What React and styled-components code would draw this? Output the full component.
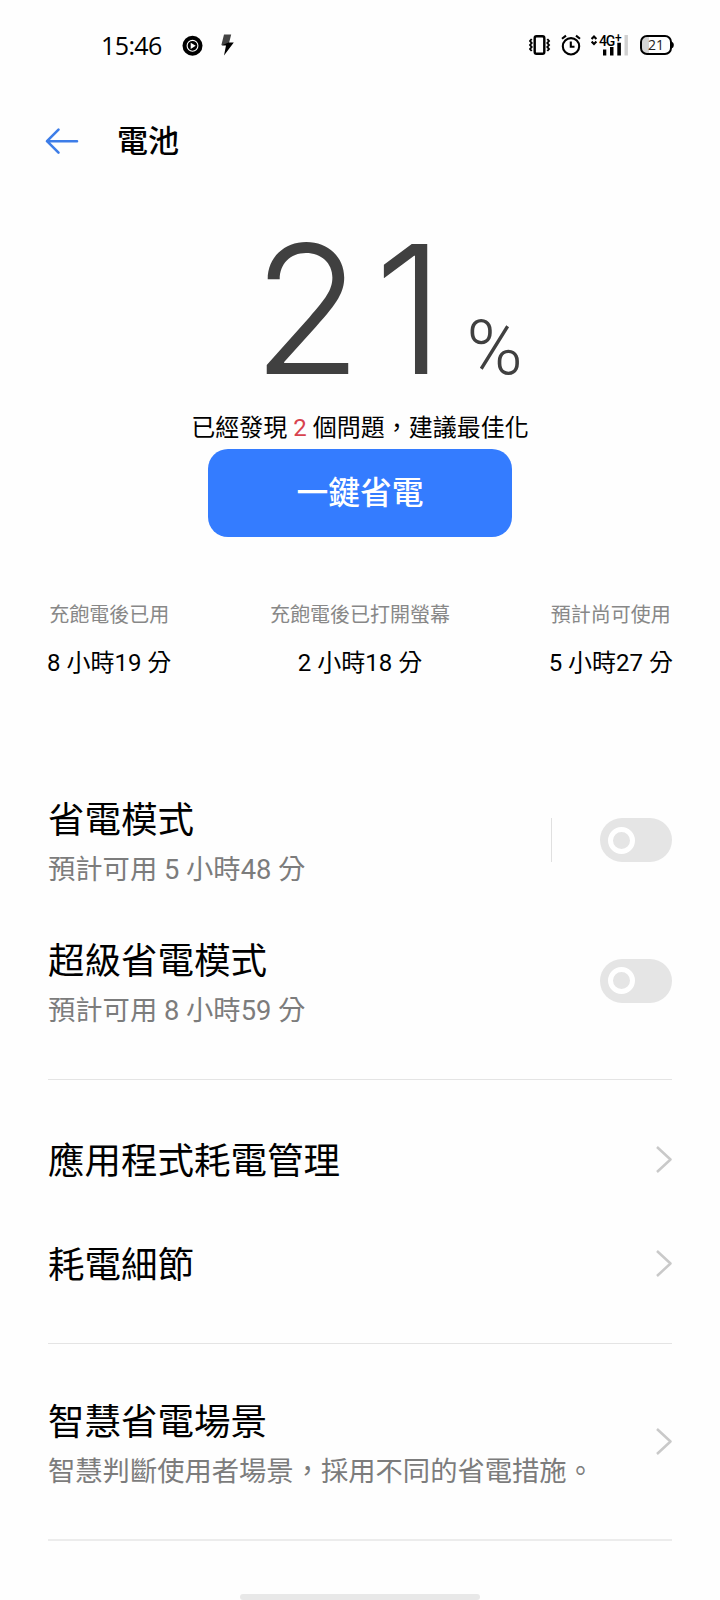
import React from 'react';
import styled, { createGlobalStyle } from 'styled-components';

const GlobalStyle = createGlobalStyle`
  * {
    box-sizing: border-box;
  }
  body {
    margin: 0;
    background: #fefefe;
    color: #000;
    font-family: Roboto, 'Noto Sans CJK TC', sans-serif;
  }
`

const Screen = styled.div`
  display: flex;
  flex-direction: column;
  width: 720px;
  height: 1600px;
  overflow: hidden;
`
const StatusBar = styled.header`
  display: flex;
  align-items: center;
  height: 90px;
  padding: 0 46px 0 101px;
`
const Clock = styled.time`
  width: 81px;
  font: 400 25px/30px 'Open Sans', sans-serif;
  letter-spacing: -0.6px;
`
const StatusIcons = styled.div`
  display: flex;
  align-items: center;
  gap: ${props => props.gap}px;
  margin-left: ${props => (props.right ? 'auto' : '0')};
`
const TitleBar = styled.div`
  display: flex;
  align-items: center;
  gap: 38px;
  height: 102px;
  padding-left: 45px;
`
const PageTitle = styled.h1`
  margin: 0;
  padding-top: 2px;
  font-size: 31px;
  font-weight: 500;
  line-height: 40px;
`
const Summary = styled.section`
  display: flex;
  flex-direction: column;
  align-items: center;
`
const Level = styled.div`
  display: flex;
  align-items: baseline;
  height: 218px;
  padding: 29px 0 0 55px;
  color: #404040;
  font-weight: 300;
`
const Digits = styled.span`
  font-family: Inter, sans-serif;
  font-size: 179px;
  line-height: 176px;
  letter-spacing: 12px;
`
const Percent = styled.span`
  margin-left: 10px;
  font-size: 76px;
  line-height: 76px;
`
const Issues = styled.p`
  margin: 0;
  font-size: 24px;
  line-height: 37px;
`
const IssueCount = styled.span`
  color: #d8434e;
`
const OptimizeButton = styled.button`
  width: 304px;
  height: 88px;
  margin-top: 2px;
  padding: 0 0 6px;
  border: 0;
  border-radius: 20px;
  background: #347cff;
  color: #fff;
  font-family: inherit;
  font-size: 31.8px;
  font-weight: 500;
`
const Stats = styled.section`
  display: flex;
  justify-content: space-between;
  height: 225px;
  padding: 63px 47px 0;
`
const Stat = styled.div`
  display: flex;
  flex-direction: column;
  align-items: center;
`
const StatLabel = styled.span`
  color: #888;
  font-size: 20px;
  line-height: 30px;
`
const StatValue = styled.span`
  margin-top: 15px;
  font-size: 24px;
  line-height: 36px;
`
const Group = styled.section`
  height: ${props => props.height}px;
  margin: 0 48px;
  padding-top: ${props => props.top}px;
  border-bottom: ${props => props.line || 1}px solid ${props => (props.line ? '#ececec' : '#e4e4e4')};
`
const Row = styled.div`
  display: flex;
  align-items: center;
  height: ${props => props.height}px;
`
const RowText = styled.div`
  flex: 1;
  padding-top: ${props => (props.tall ? 8 : 4)}px;
`
const RowTitle = styled.div`
  font-size: 36.5px;
  line-height: 52px;
`
const RowNote = styled.div`
  color: #7c7c7c;
  font-size: 27.3px;
  line-height: 46px;
`
const Separator = styled.i`
  width: 1px;
  height: 44px;
  margin-right: 48px;
  background: #e0e0e0;
`
const Switch = styled.button`
  display: flex;
  align-items: center;
  width: 72px;
  height: 44px;
  padding: 0 8px;
  border: 0;
  border-radius: 22px;
  background: #e5e5e5;
`
const Knob = styled.span`
  width: 27px;
  height: 27px;
  border: 5.5px solid #fff;
  border-radius: 50%;
`
const HomeIndicator = styled.div`
  width: 240px;
  height: 6px;
  margin: auto auto 0;
  border-radius: 3px;
  background: #e8e8e8;
`
const Network = styled.div`
  position: relative;
  width: 39px;
  height: 24px;
`
const NetworkLabel = styled.span`
  position: absolute;
  top: 1px;
  left: 8px;
  font: 500 14px/14px Roboto, sans-serif;
  letter-spacing: -1.2px;
`
const Plus = styled.sup`
  position: relative;
  top: -4px;
  margin-left: 1px;
  font-size: 12px;
  line-height: 0;
  vertical-align: baseline;
`
const Battery = styled.div`
  position: relative;
  display: flex;
  width: 34px;
  height: 20px;
`
const BatteryText = styled.span`
  position: absolute;
  left: 8px;
  top: 2px;
  color: #222;
  font: 400 14px/16px 'Open Sans', sans-serif;
`

const Chevron = () => (
  <svg width="17" height="28" viewBox="0 0 17 28" fill="none" stroke="#c9c9c9" strokeWidth="2.5">
    <path d="M2 1 L15.5 13.5 L2 26" strokeLinejoin="round" />
  </svg>
)

const SwitchRow = ({ title, note, separator }) => (
  <Row height={140.5}>
    <RowText tall>
      <RowTitle>{title}</RowTitle>
      <RowNote>{note}</RowNote>
    </RowText>
    {separator && <Separator />}
    <Switch role="switch" aria-checked="false"><Knob /></Switch>
  </Row>
)

const LinkRow = ({ title, note, height }) => (
  <Row height={height}>
    <RowText tall={!!note}>
      <RowTitle>{title}</RowTitle>
      {note && <RowNote>{note}</RowNote>}
    </RowText>
    <Chevron />
  </Row>
)

const stats = [
  { label: '充飽電後已用', value: '8 小時19 分' },
  { label: '充飽電後已打開螢幕', value: '2 小時18 分' },
  { label: '預計尚可使用', value: '5 小時27 分' },
];

const App = () => (
  <Screen>
    <GlobalStyle />
    <StatusBar>
      <Clock>15:46</Clock>
      <StatusIcons gap={17}>
        <svg width="21" height="21" viewBox="0 0 21 21">
          <circle cx="10.5" cy="10.8" r="10" />
          <circle cx="10.5" cy="10.8" r="5.4" fill="none" stroke="#fff" strokeWidth="1.1" />
          <path d="M8.7 7.7 L13.7 10.8 L8.7 13.9 Z" fill="#fff" />
        </svg>
        <svg width="14" height="22" viewBox="0 0 14 22">
          <path d="M4 0.5 H11.2 L8.5 11 H1.4 Z" fill="#444" />
          <path d="M8.5 8.5 H13.8 L4 21.5 L6 11.5 H1.4 Z" />
        </svg>
      </StatusIcons>
      <StatusIcons right gap={10}>
        <svg width="22" height="20" viewBox="0 0 22 20" fill="none" stroke="#000">
          <rect x="5.7" y="1.2" width="9.6" height="17.6" rx="1.8" strokeWidth="2.4" />
          <path d="M2.7 4 L1 6 L2.7 8 L1 10 L2.7 12 L1 14 L2.7 16 M18.3 4 L20 6 L18.3 8 L20 10 L18.3 12 L20 14 L18.3 16" strokeWidth="1.9" />
        </svg>
        <svg width="20" height="22" viewBox="0 0 20 22" fill="none" stroke="#000" strokeWidth="2.1">
          <circle cx="10" cy="12.3" r="8.2" />
          <path d="M9.8 7.5 V12.8 H13.5 M1 4.8 L5 1.6 M19 4.8 L15 1.6" />
        </svg>
        <Network>
          <svg width="39" height="24" viewBox="0 0 39 24">
            <path d="M0.6 6 L3 3.6 L5.4 6 M0.6 8.6 L3 11 L5.4 8.6" fill="none" stroke="#000" strokeWidth="2.1" />
            <path d="M12 16.5 h3.3 v6 h-3.3 Z M19 14 h3.5 v8.5 h-3.5 Z M26.3 9.7 h3.6 v12.8 h-3.6 Z" />
            <path d="M33.5 2 h3.4 v20.5 h-3.4 Z" fill="#d0d0d0" />
          </svg>
          <NetworkLabel>4G<Plus>+</Plus></NetworkLabel>
        </Network>
        <Battery>
          <svg width="34" height="20" viewBox="0 0 34 20">
            <path d="M9 2 H7 A5 5 0 0 0 2 7 V13 A5 5 0 0 0 7 18 H9 Z" fill="#d4d4d4" />
            <rect x="1" y="1" width="30" height="18" rx="6" fill="none" stroke="#000" strokeWidth="2" />
            <path d="M31 6.5 Q33.8 7 33.8 10 Q33.8 13 31 13.5 Z" />
          </svg>
          <BatteryText>21</BatteryText>
        </Battery>
      </StatusIcons>
    </StatusBar>
    <TitleBar>
      <svg width="34" height="28" viewBox="0 0 34 28" fill="none" stroke="#3d7de8" strokeWidth="2.6" strokeLinecap="round" strokeLinejoin="round">
        <path d="M32 14.2 H2 M13.5 2.7 L2 14.2 L13.5 25.7" />
      </svg>
      <PageTitle>電池</PageTitle>
    </TitleBar>
    <Summary>
      <Level>
        <Digits>21</Digits>
        <Percent>%</Percent>
      </Level>
      <Issues>已經發現 <IssueCount>2</IssueCount> 個問題，建議最佳化</Issues>
      <OptimizeButton>一鍵省電</OptimizeButton>
    </Summary>
    <Stats>
      {stats.map(stat => (
        <Stat key={stat.label}>
          <StatLabel>{stat.label}</StatLabel>
          <StatValue>{stat.value}</StatValue>
        </Stat>
      ))}
    </Stats>
    <Group height={318} top={8}>
      <SwitchRow title="省電模式" note="預計可用 5 小時48 分" separator />
      <SwitchRow title="超級省電模式" note="預計可用 8 小時59 分" />
    </Group>
    <Group height={264} top={28}>
      <LinkRow title="應用程式耗電管理" height={104} />
      <LinkRow title="耗電細節" height={104} />
    </Group>
    <Group height={197} top={28} line={2}>
      <LinkRow title="智慧省電場景" note="智慧判斷使用者場景，採用不同的省電措施。" height={139} />
    </Group>
    <HomeIndicator />
  </Screen>
)

export default App;
